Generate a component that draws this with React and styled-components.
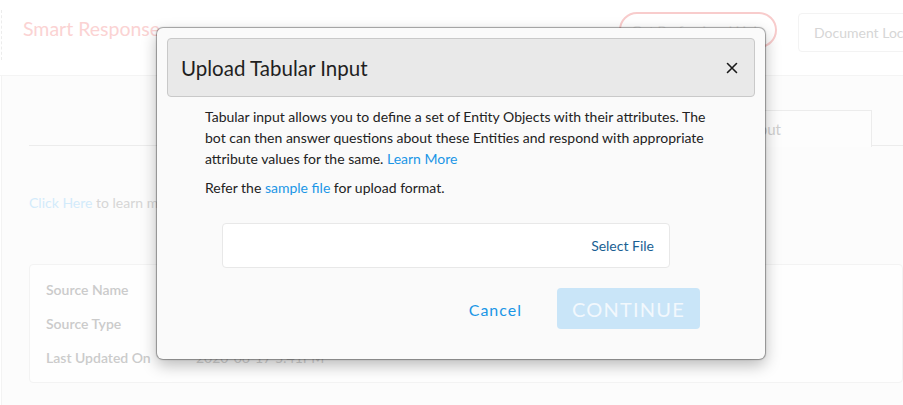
import React from 'react'
import styled, { createGlobalStyle } from 'styled-components'

const GlobalStyle = createGlobalStyle`
  html, body {
    margin: 0;
    padding: 0;
    background: #ffffff;
    font-family: Lato, "Noto Sans", sans-serif;
    overflow: hidden;
  }
  * { box-sizing: border-box; }
`;

const Page = styled.div`
  position: relative;
  width: 903px;
  height: 405px;
  overflow: hidden;
  background: #ffffff;
`;

const TopBar = styled.header`
  height: 76px;
  display: flex;
  align-items: flex-start;
  border-bottom: 1px solid #f4f4f4;
`;

const Brand = styled.div`
  margin: 10px 0 0 1px;
  height: 50px;
  padding: 7px 0 0 21px;
  border-left: 1px dashed #ececec;
  font-size: 19.5px;
  color: #fbd3d3;
  white-space: nowrap;
`;

const TopActions = styled.div`
  margin-left: auto;
  display: flex;
  gap: 21px;
  padding-top: 12px;
  margin-right: -60px;
`;

const PillButton = styled.button`
  height: 36px;
  width: 158px;
  border: 2px solid #f8cccc;
  border-radius: 20px;
  background: #fff;
  color: #ececec;
  font-family: inherit;
  font-size: 14px;
  white-space: nowrap;
`;

const GhostButton = styled.button`
  margin-top: 1px;
  height: 39px;
  width: 165px;
  border: 1px solid #f3f3f3;
  border-radius: 4px;
  background: #fff;
  color: #d6d6d6;
  font-family: inherit;
  font-size: 14px;
  text-align: left;
  padding-left: 15px;
  white-space: nowrap;
`;

const Panel = styled.section`
  margin-left: 1px;
  height: 340px;
  background: #fcfcfc;
  border-left: 1px solid #f3f3f3;
  padding: 34px 0 0 27px;
`;

const TabRow = styled.div`
  display: flex;
  justify-content: flex-end;
  height: 36px;
  border-bottom: 1px solid #ececec;
  padding-right: 31px;
`;

const Tab = styled.div`
  width: 240px;
  height: 37px;
  margin-bottom: -1px;
  background: #fdfdfd;
  border: 1px solid #ececec;
  border-bottom: none;
  display: flex;
  align-items: center;
  justify-content: flex-end;
  padding-right: 90px;
  font-size: 15px;
  color: #cfcfcf;
`;

const Hint = styled.p`
  margin: 48px 0 0;
  font-size: 14px;
  color: #d6d6d6;
`;

const HintLink = styled.span`
  color: #d3ebfb;
`;

const InfoCard = styled.div`
  margin-top: 53px;
  height: 119px;
  background: #fefefe;
  border: 1px solid #f3f3f3;
  border-radius: 4px;
  padding: 16px 16px;
  display: grid;
  grid-template-columns: 150px 1fr;
  grid-auto-rows: 34px;
`;

const InfoLabel = styled.div`
  font-size: 14px;
  color: #cbcbcb;
  font-weight: 600;
`;

const InfoValue = styled.div`
  font-size: 14px;
  color: #d4d4d4;
`;

const Modal = styled.div`
  position: absolute;
  left: 157px;
  top: 28px;
  width: 608px;
  height: 331px;
  background: #fafafa;
  border-radius: 6px;
  box-shadow: 0 0 1px 1px rgba(0, 0, 0, 0.35), 0 6px 16px rgba(0, 0, 0, 0.28);
  padding: 10px 10px 0;
  display: flex;
  flex-direction: column;
`;

const ModalHeader = styled.div`
  height: 59px;
  background: #e9e9e9;
  border: 1px solid #c9c9c9;
  border-radius: 4px;
  display: flex;
  align-items: center;
  justify-content: space-between;
  padding: 0 15px 0 13px;
`;

const ModalTitle = styled.h2`
  margin: 0;
  font-size: 20.5px;
  font-weight: 400;
  color: #1f1f1f;
`;

const CloseButton = styled.button`
  border: none;
  background: none;
  padding: 0;
  width: 14px;
  height: 14px;
  display: flex;
  cursor: pointer;
`;

const ModalBody = styled.div`
  padding: 9px 40px 0 38px;
  font-size: 14px;
  line-height: 21px;
  color: #222;
`;

const Para = styled.p`
  margin: 0 0 8px;
`;

const Link = styled.a`
  color: #1b96e6;
  text-decoration: none;
`;

const FileBox = styled.div`
  margin: 17px 0 0 55px;
  width: 448px;
  height: 45px;
  background: #fff;
  border: 1px solid #e8e8e8;
  border-radius: 4px;
  display: flex;
  align-items: center;
  justify-content: flex-end;
  padding-right: 15px;
`;

const SelectFile = styled.span`
  font-size: 14px;
  color: #1a5f93;
`;

const Actions = styled.div`
  margin-top: 20px;
  padding-right: 55px;
  display: flex;
  justify-content: flex-end;
  align-items: center;
  gap: 35px;
`;

const TextButton = styled.button`
  border: none;
  background: none;
  font-family: inherit;
  font-size: 16px;
  letter-spacing: 1px;
  color: #1b96e6;
  padding: 0;
  margin-top: 2px;
`;

const PrimaryButton = styled.button`
  width: 143px;
  height: 41px;
  border: none;
  border-radius: 4px;
  background: #c9e5f8;
  color: #f2f8fd;
  font-family: inherit;
  font-size: 20px;
  letter-spacing: 1.2px;
`;

const CloseIcon = () => (
  <svg width="14" height="14" viewBox="0 0 14 14">
    <path d="M2.5 2.5 L11.5 11.5 M11.5 2.5 L2.5 11.5" stroke="#1a1a1a" strokeWidth="1.6" strokeLinecap="round" />
  </svg>
);

export default function App() {
  return (
    <>
      <GlobalStyle />
      <Page>
        <TopBar>
          <Brand>Smart Response</Brand>
          <TopActions>
            <PillButton>Get Professional Help</PillButton>
            <GhostButton>Document Location</GhostButton>
          </TopActions>
        </TopBar>
        <Panel>
          <TabRow>
            <Tab>Tabular Input</Tab>
          </TabRow>
          <Hint><HintLink>Click Here</HintLink> to learn more about smart response sources.</Hint>
          <InfoCard>
            <InfoLabel>Source Name</InfoLabel>
            <InfoValue>Tabular Input</InfoValue>
            <InfoLabel>Source Type</InfoLabel>
            <InfoValue>Table</InfoValue>
            <InfoLabel>Last Updated On</InfoLabel>
            <InfoValue>2020-06-17 5:41PM</InfoValue>
          </InfoCard>
        </Panel>

        <Modal>
          <ModalHeader>
            <ModalTitle>Upload Tabular Input</ModalTitle>
            <CloseButton aria-label="Close"><CloseIcon /></CloseButton>
          </ModalHeader>
          <ModalBody>
            <Para>
              Tabular input allows you to define a set of Entity Objects with their attributes. The
              bot can then answer questions about these Entities and respond with appropriate
              attribute values for the same. <Link href="#">Learn More</Link>
            </Para>
            <Para>
              Refer the <Link href="#">sample file</Link> for upload format.
            </Para>
          </ModalBody>
          <FileBox>
            <SelectFile>Select File</SelectFile>
          </FileBox>
          <Actions>
            <TextButton>Cancel</TextButton>
            <PrimaryButton>CONTINUE</PrimaryButton>
          </Actions>
        </Modal>
      </Page>
    </>
  )
}
